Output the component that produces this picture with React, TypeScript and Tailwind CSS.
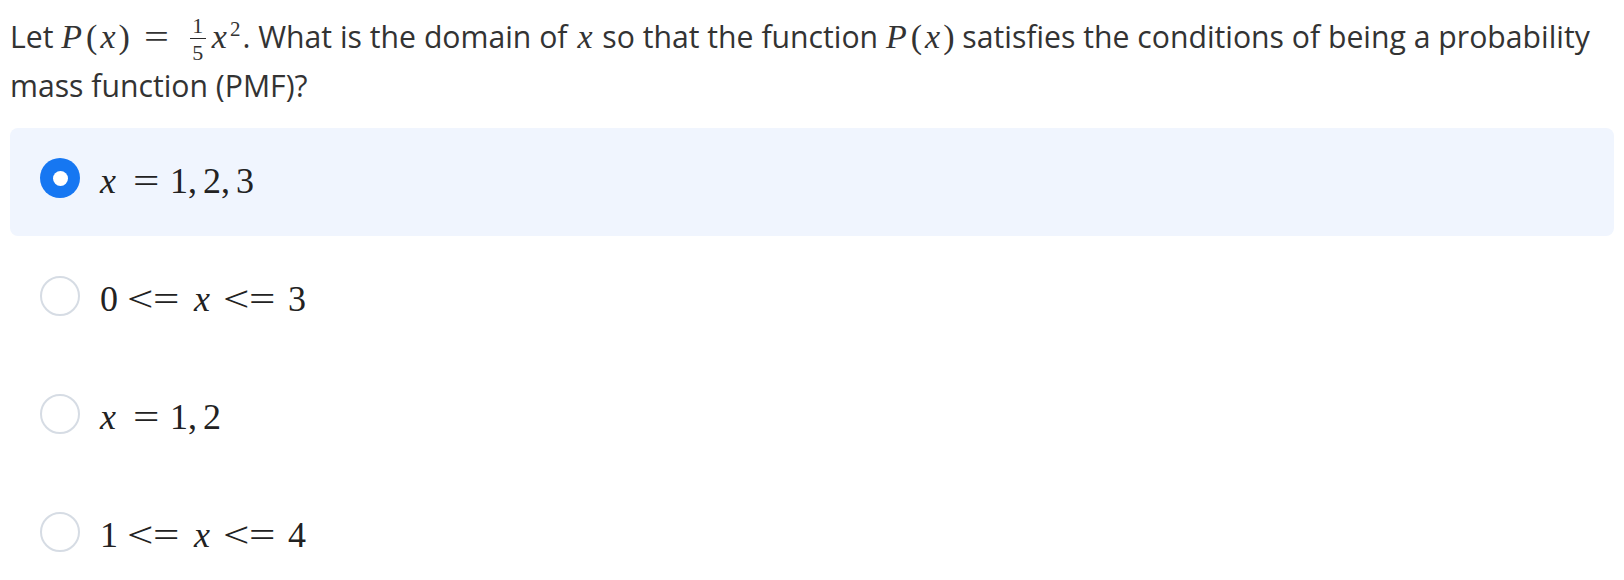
const serif = "font-['Liberation_Serif','Times_New_Roman',serif]";

function V({ children, cls = "" }: { children: React.ReactNode; cls?: string }) {
  return <span className={`${serif} italic ${cls}`}>{children}</span>;
}

// relation glyph, widened a little so it reads like TeX's = and <
function Rel({ c, w }: { c: string; w: string }) {
  return (
    <span className={`inline-block text-center ${w}`}>
      <span className="inline-block scale-x-[1.3]">{c}</span>
    </span>
  );
}

function Frac() {
  return (
    <span className={`${serif} mx-[6px] inline-flex flex-col items-center align-[15px] text-[22px] leading-[14px]`}>
      <span>1</span>
      <span className="mt-[5px] h-px w-[16px] bg-[#2a2a2a]" />
      <span className="mt-[7px]">5</span>
    </span>
  );
}

function Radio({ checked }: { checked: boolean }) {
  if (checked) {
    return (
      <span className="flex h-10 w-10 shrink-0 items-center justify-center rounded-full bg-[#1677f2]">
        <span className="h-[15px] w-[15px] rounded-full bg-white" />
      </span>
    );
  }
  return <span className="h-10 w-10 shrink-0 rounded-full border-2 border-[#d6dce4] bg-white" />;
}

function Px() {
  return (
    <>
      <V>P</V>
      <span className="ml-[4px]">(</span>
      <V cls="mx-[3px]">x</V>)
    </>
  );
}

const options: { label: React.ReactNode; checked: boolean }[] = [
  {
    checked: true,
    label: (
      <>
        <V>x</V>
        <Rel c="=" w="ml-[14px] w-[32px]" />
        <span className="ml-[8px]">1,</span>
        <span className="ml-[6px]">2,</span>
        <span className="ml-[6px]">3</span>
      </>
    ),
  },
  {
    checked: false,
    label: (
      <>
        0
        <Rel c="<" w="ml-[10px] w-[24px]" />
        <Rel c="=" w="w-[28px]" />
        <span className="ml-[14px]">
          <V>x</V>
        </span>
        <Rel c="<" w="ml-[14px] w-[24px]" />
        <Rel c="=" w="w-[28px]" />
        <span className="ml-[12px]">3</span>
      </>
    ),
  },
  {
    checked: false,
    label: (
      <>
        <V>x</V>
        <Rel c="=" w="ml-[14px] w-[32px]" />
        <span className="ml-[8px]">1,</span>
        <span className="ml-[6px]">2</span>
      </>
    ),
  },
  {
    checked: false,
    label: (
      <>
        1
        <Rel c="<" w="ml-[10px] w-[24px]" />
        <Rel c="=" w="w-[28px]" />
        <span className="ml-[14px]">
          <V>x</V>
        </span>
        <Rel c="<" w="ml-[14px] w-[24px]" />
        <Rel c="=" w="w-[28px]" />
        <span className="ml-[12px]">4</span>
      </>
    ),
  },
];

export default function App() {
  return (
    <div className="min-h-[580px] w-[1624px] bg-white px-[10px] pt-[12px] font-['Open_Sans',sans-serif] text-[#333333]">
      <p className="text-[30.2px] leading-[49px]">
        Let{" "}
        <span className={`${serif} text-[34px] leading-none`}>
          <Px />
          <Rel c="=" w="mx-[12px] w-[30px]" />
        </span>
        <Frac />
        <span className={`${serif} text-[34px] leading-none`}>
          <V cls="mr-[3px]">x</V>
          <span className="mr-[2px] inline-block align-[12px] text-[21px] leading-none">2</span>
        </span>
        . What is the domain of{" "}
        <span className={`${serif} text-[34px] leading-none`}>
          <V cls="mx-[2px]">x</V>
        </span>{" "}
        so that the function{" "}
        <span className={`${serif} text-[34px] leading-none`}>
          <Px />
        </span>{" "}
        satisfies the conditions of being a probability mass function (PMF)?
      </p>
      <div className="mt-[18px] flex flex-col gap-[10px]">
        {options.map((o, i) => (
          <div
            key={i}
            className={`flex h-[108px] items-center gap-5 rounded-lg px-[30px] pb-[8px] ${o.checked ? "bg-[#f0f5fe]" : ""}`}
          >
            <Radio checked={o.checked} />
            <span className={`${serif} pt-[6px] text-[36px] leading-none text-[#222]`}>{o.label}</span>
          </div>
        ))}
      </div>
    </div>
  );
}
